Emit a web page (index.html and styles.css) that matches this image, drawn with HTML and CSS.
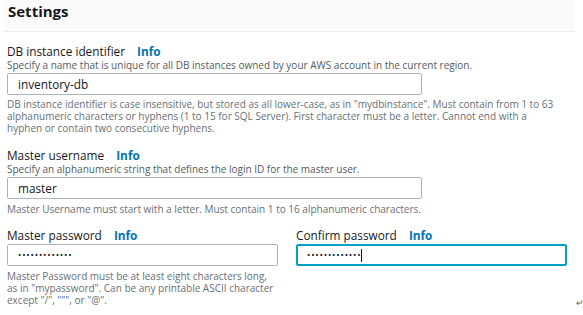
FILE: index.html
```html
<!DOCTYPE html>
<html lang="en">
<head>
    <meta charset="UTF-8">
    <title>Settings</title>
    <link rel="stylesheet" href="styles.css">
</head>
<body>
    <div class="panel">
        <div class="panel-header">
            <h2>Settings</h2>
        </div>

        <div class="field field-first">
            <div class="label">DB instance identifier <a class="info">Info</a></div>
            <div class="desc">Specify a name that is unique for all DB instances owned by your AWS account in the current region.</div>
            <div class="input wide">inventory-db</div>
            <div class="hint">DB instance identifier is case insensitive, but stored as all lower-case, as in "mydbinstance". Must contain from 1 to 63 alphanumeric characters or hyphens (1 to 15 for SQL Server). First character must be a letter. Cannot end with a hyphen or contain two consecutive hyphens.</div>
        </div>

        <div class="field field-second">
            <div class="label">Master username <a class="info">Info</a></div>
            <div class="desc">Specify an alphanumeric string that defines the login ID for the master user.</div>
            <div class="input wide">master</div>
            <div class="hint">Master Username must start with a letter. Must contain 1 to 16 alphanumeric characters.</div>
        </div>

        <div class="pair">
            <div class="field">
                <div class="label">Master password <a class="info">Info</a></div>
                <div class="input dots">•••••••••••••</div>
                <div class="hint">Master Password must be at least eight characters long, as in "mypassword". Can be any printable ASCII character except "/", """, or "@".</div>
            </div>
            <div class="field">
                <div class="label">Confirm password <a class="info">Info</a></div>
                <div class="input dots focused">•••••••••••••<span class="caret"></span></div>
            </div>
        </div>
    </div>
    <span class="para-mark">↵</span>
</body>
</html>
```

FILE: styles.css
```css
body {
    margin: 0;
    font-family: "Open Sans", Arial, sans-serif;
    color: #16191f;
    background: #fff;
    position: relative;
    width: 583px;
    height: 315px;
    overflow: hidden;
}
.panel {
    width: 571px;
    margin-left: 4px;
}
.panel-header {
    background: #fafafa;
    border-bottom: 1px solid #eaeded;
    height: 32px;
    box-sizing: border-box;
    padding: 1px 0 0 4px;
}
.panel-header h2 {
    margin: 0;
    font-size: 15px;
    font-weight: 700;
    line-height: 20px;
}
.field {
    padding-left: 3px;
}
.field-first {
    margin-top: 11px;
}
.field-second {
    margin-top: 13px;
}
.label {
    font-size: 11.8px;
    line-height: 16px;
    color: #16191f;
}
.info {
    color: #0073bb;
    font-weight: 700;
    margin-left: 9px;
}
.desc {
    font-size: 10px;
    line-height: 12px;
    color: #545b64;
}
.input {
    border: 1px solid #aab7b8;
    border-radius: 2px;
    height: 22px;
    box-sizing: border-box;
    font-size: 11.8px;
    line-height: 20px;
    padding-left: 10px;
    margin-top: 2px;
    color: #16191f;
}
.wide {
    width: 415px;
}
.dots {
    font-size: 9px;
    letter-spacing: 0.8px;
}
.focused {
    border: 2px solid #00a1c9;
    line-height: 18px;
    padding-left: 9px;
}
.caret {
    display: inline-block;
    width: 1px;
    height: 13px;
    background: #16191f;
    vertical-align: middle;
}
.hint {
    font-size: 10px;
    line-height: 12px;
    color: #687078;
    margin-top: 3px;
    width: 550px;
}
.field-second .hint {
    margin-top: 4px;
}
.pair {
    display: grid;
    grid-template-columns: 274px 274px;
    column-gap: 15px;
    margin-top: 12px;
}
.pair .input {
    margin-top: 1px;
}
.pair .hint {
    width: 268px;
    margin-top: 4px;
}
.para-mark {
    position: absolute;
    left: 576px;
    top: 296px;
    font-size: 9px;
    color: #666;
}
```
